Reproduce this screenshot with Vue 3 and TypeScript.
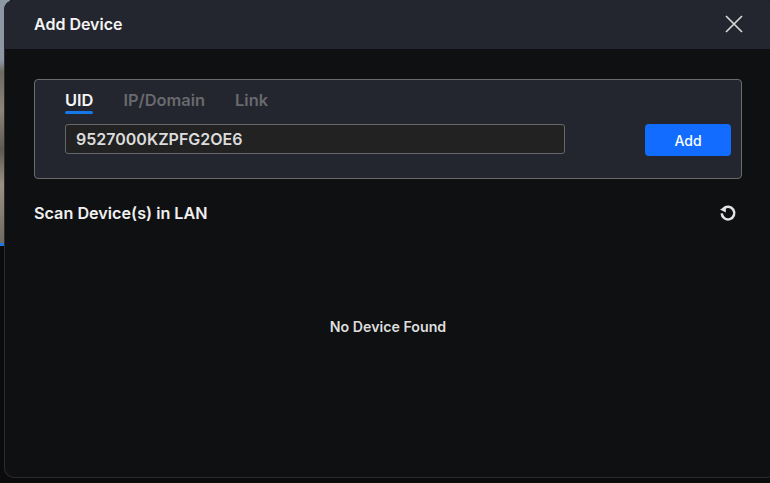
<script setup lang="ts">
const tabs: { label: string; active?: boolean }[] = [
  { label: 'UID', active: true },
  { label: 'IP/Domain' },
  { label: 'Link' },
]
</script>

<template>
  <div class="screen">
    <div class="backdrop">
      <div class="photo"></div>
      <div class="blue"></div>
    </div>
    <section class="dialog">
      <header class="head">
        <h1 class="title">Add Device</h1>
        <button class="close" aria-label="Close">
          <svg width="18" height="18" viewBox="0 0 18 18">
            <path d="M1 1 17 17M17 1 1 17" stroke="#d8d8d8" stroke-width="1.7" fill="none" />
          </svg>
        </button>
      </header>
      <div class="body">
        <div class="panel">
          <div class="fields">
            <nav class="tabs">
              <span v-for="t in tabs" :key="t.label" class="tab" :class="{ active: t.active }">{{ t.label }}</span>
            </nav>
            <div class="input">9527000KZPFG2OE6</div>
          </div>
          <button class="add">Add</button>
        </div>
        <div class="scan">
          <h2 class="scan-title">Scan Device(s) in LAN</h2>
          <button class="refresh" aria-label="Refresh">
            <svg width="18" height="18" viewBox="0 0 18 18" fill="none">
              <path d="M4.4 4.8A6.3 6.3 0 1 1 2.7 9.4" stroke="#e4e4e4" stroke-width="2.5" />
              <path d="M1 5.4 6.8 2.2 6.8 8.6Z" fill="#e4e4e4" />
            </svg>
          </button>
        </div>
        <p class="empty">No Device Found</p>
      </div>
    </section>
  </div>
</template>

<style>
html, body { margin: 0; background: #000; }
</style>

<style scoped>
.screen {
  position: relative;
  width: 770px;
  height: 483px;
  overflow: hidden;
  background: #0b0b0c;
  font-family: Inter, "Liberation Sans", sans-serif;
}
.backdrop {
  position: absolute;
  left: 0;
  top: 0;
  width: 10px;
  height: 246px;
}
.photo {
  height: 243px;
  background: linear-gradient(180deg, #8c97a4 0, #8f98a2 60px, #6e6a60 72px, #8b8478 110px, #5f5a50 150px, #9a9184 185px, #6f6a5f 243px);
}
.blue { height: 3px; background: #1a78e0; }
.dialog {
  position: relative;
  margin-left: 4px;
  width: 772px;
  height: 478px;
  box-sizing: border-box;
  border-radius: 10px;
  background: #0f1012;
  box-shadow: inset 0 0 0 1px #2a2b2d;
  overflow: hidden;
  display: flex;
  flex-direction: column;
}
.head {
  flex: none;
  height: 49px;
  box-sizing: border-box;
  background: #23262f;
  display: flex;
  align-items: center;
  justify-content: space-between;
  padding: 0 33px 1px 30px;
}
.title {
  margin: 0;
  font-size: 16px;
  font-weight: 600;
  color: #f4f4f4;
}
.close, .refresh {
  padding: 0;
  border: 0;
  background: none;
  display: flex;
}
.body { padding: 30px 30px 0; }
.panel {
  width: 708px;
  height: 100px;
  box-sizing: border-box;
  border: 1px solid #6a6b6e;
  border-radius: 4px;
  background: #23262f;
  display: flex;
  align-items: flex-start;
  justify-content: space-between;
  padding: 0 10px 0 30px;
}
.fields { width: 500px; }
.tabs {
  display: flex;
  gap: 30px;
  height: 44px;
  padding-top: 10px;
  box-sizing: border-box;
}
.tab {
  position: relative;
  height: 24px;
  font-size: 16.4px;
  line-height: 20px;
  font-weight: 600;
  color: #696a6d;
}
.tab.active { color: #f6f6f6; }
.tab.active::after {
  content: "";
  position: absolute;
  left: 0;
  right: 0;
  bottom: 0;
  height: 3px;
  border-radius: 2px;
  background: #1677e8;
}
.input {
  height: 30px;
  box-sizing: border-box;
  border: 1px solid #66676a;
  border-radius: 3px;
  background: #222222;
  padding: 0 10px;
  font-size: 16px;
  line-height: 29px;
  font-weight: 600;
  color: #dcdcdc;
}
.add {
  width: 86px;
  height: 32px;
  margin-top: 44px;
  border: 0;
  border-radius: 4px;
  background: #116cff;
  color: #fff;
  font: 500 14px Inter, "Liberation Sans", sans-serif;
}
.scan {
  display: flex;
  justify-content: space-between;
  align-items: center;
  width: 708px;
  margin-top: 23px;
  height: 22px;
}
.scan-title {
  margin: 0;
  font-size: 16.2px;
  font-weight: 600;
  color: #f0f0f0;
}
.refresh { margin-right: 5px; }
.empty {
  margin: 94px 0 0;
  text-align: center;
  font-size: 14.2px;
  line-height: 18px;
  font-weight: 600;
  color: #dedede;
  padding-right: 4px;
}
</style>
